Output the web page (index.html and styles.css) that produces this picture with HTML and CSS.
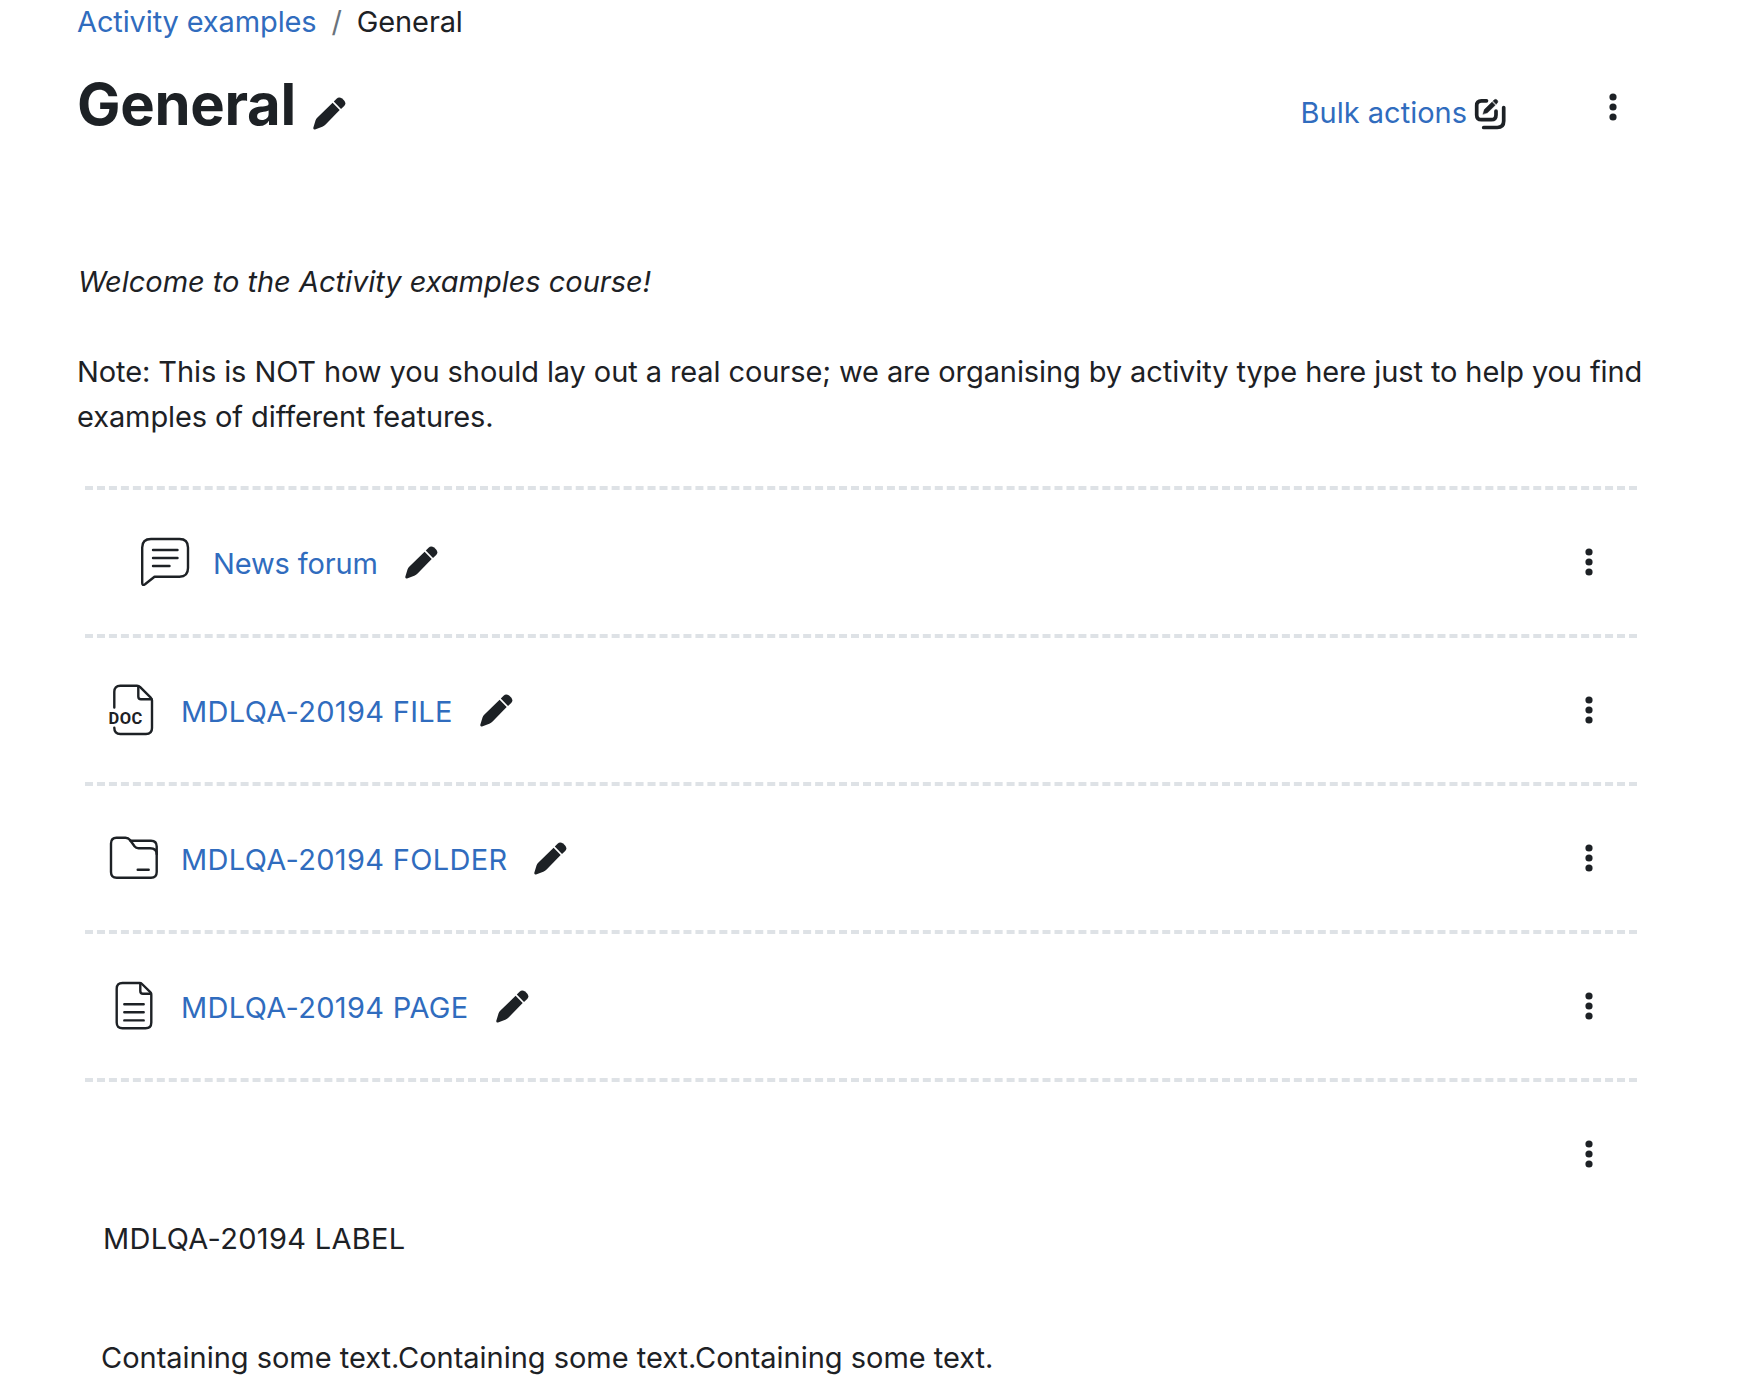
FILE: index.html
```
<!DOCTYPE html>
<html lang="en">
<head>
    <meta charset="UTF-8">
    <meta name="viewport" content="width=device-width, initial-scale=1.0">
    <title>General</title>
    <link rel="stylesheet" href="styles.css">
</head>
<body>
	<svg class="sprite">
		<symbol id="pencil" viewBox="0 0 33 33">
			<path d="M19.6 5.8 26.7 12.9 12.6 27.6Q11.2 29 9.3 29.7L2 32.4Q0 32.8.3 30.8L2.5 23.6Q3 22 4.2 20.8Z"/>
			<path d="M20.8 4.6 23.6 1.7Q26-.7 29.1 1.6L31.1 3.6Q33.6 6.5 31.2 9L28 12Z"/>
		</symbol>
		<symbol id="dots" viewBox="0 0 8 28">
			<circle cx="4" cy="4" r="3.6"/>
			<circle cx="4" cy="14" r="3.6"/>
			<circle cx="4" cy="24" r="3.6"/>
		</symbol>
	</svg>
	<div class="page">
		<div class="breadcrumb"><a href="#">Activity examples</a><span class="slash">/</span><span>General</span></div>
		<div class="header">
			<h1>General</h1>
			<svg class="pencil"><use href="#pencil"/></svg>
			<a class="bulk" href="#">Bulk actions</a>
			<svg class="bulkIcon" viewBox="0 0 31 31">
				<path d="M11.5 1.8H6.5Q1.7 1.8 1.7 6.5V16Q1.7 20.7 6.5 20.7H16.3Q21 20.7 21 16V12"/>
				<path d="M28.7 8.5V22Q28.7 28.5 22.2 28.5H8.7"/>
				<path class="solid" d="M8 15 9.3 10.6 17 3 20.2 6.2 12.5 13.7ZM17.9 2.1 19.3.8Q20.7-.3 22.2 1.1 23.5 2.6 22.4 4L21.1 5.3Z"/>
			</svg>
			<svg class="dots"><use href="#dots"/></svg>
		</div>
		<div class="summary">
			<p class="welcome"><em>Welcome to the Activity examples course!</em></p>
			<p class="note">Note: This is NOT how you should lay out a real course; we are organising by activity type here just to help you find <br>examples of different features.</p>
		</div>
		<div class="list">
			<div class="activity indent">
				<svg class="icon" viewBox="0 0 50 50">
					<path d="M10 2H38.5Q47 2 47 10.5V31Q47 39.7 38.5 39.7H13.5L4 47.2Q1.2 49 1.2 46V10.5Q1.2 2 10 2Z"/>
					<path d="M12 13H36.5M12 21H36.5M12 29H28.5"/>
				</svg>
				<a class="forum" href="#">News forum</a>
				<svg class="pencil"><use href="#pencil"/></svg>
				<svg class="dots"><use href="#dots"/></svg>
			</div>
			<div class="activity">
				<svg class="icon" viewBox="0 0 50 50">
					<path d="M5.3 22.5V6.8Q5.3.8 11.3.8H28Q29.8.8 31.2 2.2L41.5 12.3Q43 13.8 43 15.5V43Q43 49 37 49H11.3Q5.3 49 5.3 42.7"/>
					<path d="M29.3 1.5V11.5Q29.3 14.3 32 14.3H42.5"/>
					<text x="-.6" y="38.7">DOC</text>
				</svg>
				<a href="#">MDLQA-20194 FILE</a>
				<svg class="pencil"><use href="#pencil"/></svg>
				<svg class="dots"><use href="#dots"/></svg>
			</div>
			<div class="activity">
				<svg class="icon" viewBox="0 0 50 50">
					<path d="M7.5 4.7H16.5Q19.3 4.7 21 7L25.5 13.3Q27 15.3 29.5 15.3H41Q47.7 15.3 47.7 21V39Q47.7 44.7 42 44.7H7.7Q2 44.7 2 39V10.5Q2 4.7 7.5 4.7Z"/>
					<path d="M21.5 7.7H42Q47.7 7.7 47.7 13.5V21M28.7 36.7H39.7"/>
				</svg>
				<a href="#">MDLQA-20194 FOLDER</a>
				<svg class="pencil"><use href="#pencil"/></svg>
				<svg class="dots"><use href="#dots"/></svg>
			</div>
			<div class="activity">
				<svg class="icon" viewBox="0 0 50 50">
					<path d="M13.5 2H30.5Q32 2 33 3L41.3 11.2Q42.3 12.2 42.3 13.7V41.5Q42.3 47.3 36.5 47.3H13.5Q7.7 47.3 7.7 41.5V7.8Q7.7 2 13.5 2Z"/>
					<path d="M31.3 2.5V10Q31.3 12.7 34 12.7H42M15.3 23.2H34.7M15.3 31.3H34.7M15.3 39.4H34.7"/>
				</svg>
				<a href="#">MDLQA-20194 PAGE</a>
				<svg class="pencil"><use href="#pencil"/></svg>
				<svg class="dots"><use href="#dots"/></svg>
			</div>
			<div class="label">
				<svg class="dots"><use href="#dots"/></svg>
				<p class="labelTitle">MDLQA-20194 LABEL</p>
				<p class="labelText">Containing some text.Containing some text.Containing some text.</p>
			</div>
		</div>
	</div>
</body>
</html>
```
FILE: styles.css
```
body,html{
	margin: 0;
	padding: 0;
	background: #fff;
}
body{
	font-family: Inter, "Liberation Sans", sans-serif;
	font-size: 29px;
	line-height: 45px;
	color: #1d2125;
}
a{
	color: #306cbe;
	text-decoration: none;
}
p,h1{
	margin: 0;
}
svg{
	display: block;
	flex-shrink: 0;
	fill: #1d2125;
	overflow: visible;
}
.sprite{
	display: none;
}
.page{
	width: 1568px;
	padding-left: 77px;
}
.breadcrumb{
	height: 43px;
	line-height: 43px;
	display: flex;
	letter-spacing: -0.13px;
}
.slash{
	color: #6a737b;
	margin: 0 15px;
}
.header{
	display: flex;
	height: 216px;
}
h1{
	font-size: 58px;
	line-height: 72px;
	font-weight: 700;
	letter-spacing: -0.3px;
	margin-top: 25px;
}
.pencil{
	width: 33px;
	height: 33px;
}
.dots{
	width: 8px;
	height: 28px;
}
.header .pencil{
	margin: 54px 0 0 17px;
}
.bulk{
	margin: 47px 8px 0 auto;
}
.bulkIcon{
	width: 31px;
	height: 31px;
	margin-top: 56px;
	fill: none;
	stroke: #1d2125;
	stroke-width: 3.7;
	stroke-linecap: round;
}
.bulkIcon .solid{
	fill: #1d2125;
	stroke: #1d2125;
	stroke-width: 0.4;
}
.header .dots{
	margin: 50px 28px 0 103px;
}
.summary p{
	margin-bottom: 45px;
	white-space: nowrap;
}
.welcome{
	padding-left: 1px;
	letter-spacing: -0.03px;
}
.note{
	letter-spacing: -0.094px;
}
.list{
	width: 1552px;
	margin: 47px 0 0 8px;
}
.activity{
	height: 144px;
	border-top: 4px dashed #dee2e6;
	display: flex;
	align-items: center;
	padding: 0 44px 0 24px;
}
.indent{
	padding-left: 56px;
}
.icon{
	width: 50px;
	height: 50px;
	margin-right: 22px;
	fill: none;
	stroke: #1d2125;
	stroke-width: 2.4;
	stroke-linecap: round;
	stroke-linejoin: round;
}
.icon text{
	font: 700 16.5px Roboto, sans-serif;
	letter-spacing: 0.5px;
	fill: #1d2125;
	stroke: none;
}
.activity a{
	margin: 3px 27px 0 0;
	letter-spacing: 0.32px;
}
.activity .forum{
	letter-spacing: -0.13px;
}
.activity .dots{
	margin-left: auto;
}
.label{
	border-top: 4px dashed #dee2e6;
	padding: 58px 44px 0 17px;
}
.label .dots{
	margin-left: auto;
}
.labelTitle{
	margin-top: 48px;
	padding-left: 1px;
	letter-spacing: 0.32px;
}
.labelText{
	margin: 74px 0 0 -1px;
	letter-spacing: -0.02px;
}
```
